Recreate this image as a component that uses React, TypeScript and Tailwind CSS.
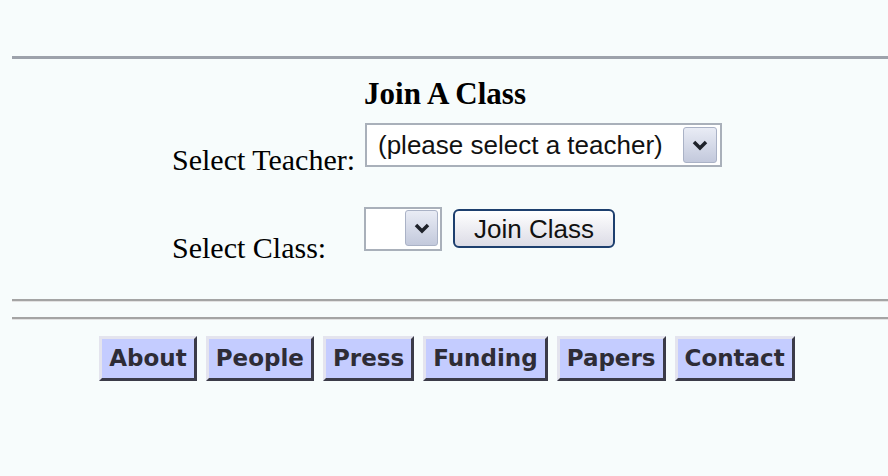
import React from "react";

const navItems = ["About", "People", "Press", "Funding", "Papers", "Contact"];

const DropArrow = ({ className }: { className: string }) => (
  <span
    className={`flex items-center justify-center rounded-[3px] border border-[#aab2c6] bg-gradient-to-b from-[#e9ecf5] to-[#c3c9dc] ${className}`}
  >
    <svg width="16" height="12" viewBox="0 0 16 12">
      <polyline points="2,3 8,9 14,3" fill="none" stroke="#1e222a" strokeWidth="3.5" />
    </svg>
  </span>
);

const NavButton = ({ label }: { label: string }) => (
  <a
    href="#"
    className="border-[3px] border-t-[#e4e4ee] border-l-[#e4e4ee] border-r-[#3b3b48] border-b-[#3b3b48] bg-[#c4ccff] px-[7px] pt-[4px] pb-[5px] text-[23px] font-bold leading-[30px] text-[#2e2c36] no-underline"
    style={{ fontFamily: '"DejaVu Sans", Verdana, sans-serif' }}
  >
    {label}
  </a>
);

export default function App() {
  const serif = { fontFamily: '"Liberation Serif", "Times New Roman", serif' };
  const sans = { fontFamily: '"Liberation Sans", Arial, sans-serif' };

  return (
    <div className="min-h-screen bg-[#f7fcfc] pl-[12px] pt-[56px]" style={serif}>
      <hr className="h-[3px] border-0 bg-[#9da2ab]" />

      <h3 className="mt-[19px] pr-[10px] text-center text-[31px] font-bold leading-none text-black">Join A Class</h3>

      <form className="mt-[14px] flex justify-center pr-[6px]" onSubmit={(e) => e.preventDefault()}>
        <div className="flex flex-col gap-[40px]">
          <div className="flex h-[44px] items-start">
            <label className="mt-[22px] w-[193px] whitespace-nowrap text-[30px] leading-none text-black">
              Select Teacher:
            </label>
            <div
              className="relative flex h-[44px] w-[357px] items-center border-2 border-[#a9b0ba] bg-white pl-[11px] text-[26px] text-[#111]"
              style={sans}
            >
              (please select a teacher)
              <DropArrow className="absolute right-[3px] top-[2px] h-[36px] w-[34px]" />
            </div>
          </div>

          <div className="flex h-[44px] items-start">
            <label className="mt-[26px] w-[192px] whitespace-nowrap text-[30px] leading-none text-black">
              Select Class:
            </label>
            <div className="relative h-[44px] w-[78px] border-2 border-[#a9b0ba] bg-white">
              <DropArrow className="absolute right-[2px] top-[1px] h-[36px] w-[33px]" />
            </div>
            <button
              type="submit"
              className="ml-[11px] mt-[2px] h-[39px] w-[162px] rounded-[6px] border-2 border-[#1d3f6e] bg-gradient-to-b from-white to-[#dcdce6] text-[26px] leading-none text-[#111]"
              style={sans}
            >
              Join Class
            </button>
          </div>
        </div>
      </form>

      <hr className="mt-[48px] h-[3px] border-0 border-t-2 border-t-[#a4a4a4] bg-[#e2e2e2]" />
      <hr className="mt-[15px] h-[3px] border-0 border-t-2 border-t-[#a4a4a4] bg-[#e2e2e2]" />

      <nav className="mt-[16px] flex justify-center gap-[9px] pr-[6px]">
        {navItems.map((item) => (
          <NavButton key={item} label={item} />
        ))}
      </nav>
    </div>
  );
}
